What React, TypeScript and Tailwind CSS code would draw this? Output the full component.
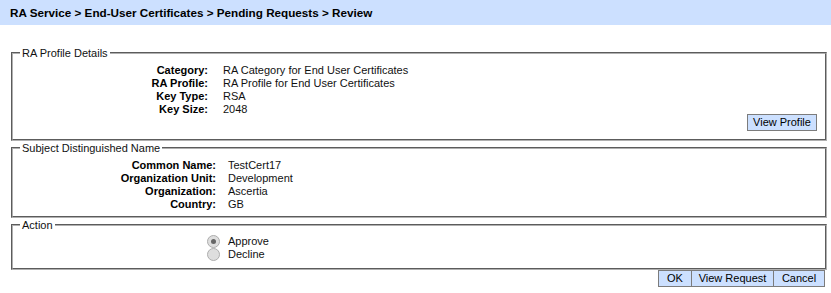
import React from "react";

const profileRows: [string, string][] = [
  ["Category:", "RA Category for End User Certificates"],
  ["RA Profile:", "RA Profile for End User Certificates"],
  ["Key Type:", "RSA"],
  ["Key Size:", "2048"],
];

const subjectRows: [string, string][] = [
  ["Common Name:", "TestCert17"],
  ["Organization Unit:", "Development"],
  ["Organization:", "Ascertia"],
  ["Country:", "GB"],
];

function Box({ title, className, children }: { title: string; className?: string; children: React.ReactNode }) {
  return (
    <fieldset className={`border-2 [border-style:groove] border-[#b0b0b0] ${className ?? ""}`}>
      <legend className="ml-[7px] px-[2px] text-[11px] leading-[14px] text-[#111]">{title}</legend>
      {children}
    </fieldset>
  );
}

function Rows({ rows, labelWidth, gap }: { rows: [string, string][]; labelWidth: string; gap: string }) {
  return (
    <div className="flex flex-col">
      {rows.map(([k, v]) => (
        <div key={k} className={`flex h-[13px] items-center leading-[13px] ${gap}`}>
          <span className={`${labelWidth} text-right font-bold text-black`}>{k}</span>
          <span className="text-[#111]">{v}</span>
        </div>
      ))}
    </div>
  );
}

function Btn({ children, className }: { children: React.ReactNode; className?: string }) {
  return (
    <button
      className={`h-[17px] border border-[#7c7c7c] bg-[#cce0ff] font-['Liberation_Sans',Arial,sans-serif] text-[11px] leading-[15px] text-black ${className ?? ""}`}
    >
      {children}
    </button>
  );
}

function Radio({ label, checked }: { label: string; checked?: boolean }) {
  return (
    <div className="flex h-[13px] items-center">
      <span className="ml-[194px] flex h-[13px] w-[13px] items-center justify-center rounded-full border border-[#adadad] bg-[#dedede]">
        {checked && <span className="h-[5px] w-[5px] rounded-full bg-[#666]" />}
      </span>
      <span className="ml-[8px] text-[#111]">{label}</span>
    </div>
  );
}

export default function App() {
  return (
    <div className="h-[293px] w-[831px] bg-white font-['Liberation_Sans',Arial,sans-serif] text-[11px]">
      <div className="flex h-[25px] items-center bg-[#cce0ff] pl-[10px] text-[11.7px] font-bold text-black">
        RA Service &gt; End-User Certificates &gt; Pending Requests &gt; Review
      </div>

      <div className="ml-[11px] mr-[4px] mt-[21px] flex flex-col">
        <Box title="RA Profile Details" className="pb-[8px] pr-[8px] pt-[4px]">
          <Rows rows={profileRows} labelWidth="w-[195px]" gap="gap-[15px]" />
          <div className="-mt-[2px] flex justify-end">
            <Btn className="w-[70px]">View Profile</Btn>
          </div>
        </Box>

        <Box title="Subject Distinguished Name" className="pb-[5px] pt-[4px]">
          <Rows rows={subjectRows} labelWidth="w-[203px]" gap="gap-[12px]" />
        </Box>

        <Box title="Action" className="pb-[7px] pt-[3px]">
          <Radio label="Approve" checked />
          <Radio label="Decline" />
        </Box>

        <div className="mr-[2px] flex justify-end">
          <Btn className="w-[34px]">OK</Btn>
          <Btn className="w-[82px] border-l-0">View Request</Btn>
          <Btn className="w-[51px] border-l-0">Cancel</Btn>
        </div>
      </div>
    </div>
  );
}
